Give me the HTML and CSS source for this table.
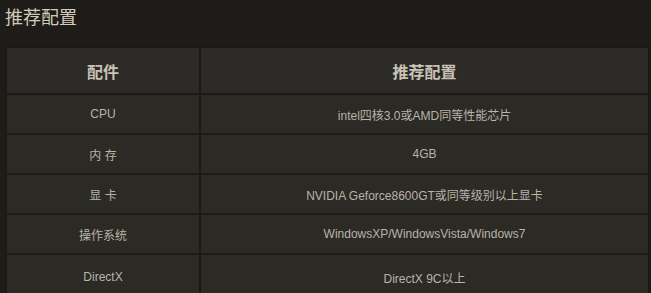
FILE: index.html
```html
<!DOCTYPE html>
<html lang="zh-CN">
<head>
  <meta charset="UTF-8" />
  <title>推荐配置</title>
  <link rel="stylesheet" href="styles.css">
</head>
<body>
  <div class="section">
    <h2 class="section-title">推荐配置</h2>
    <table class="spec-table">
      <thead>
        <tr>
          <th class="col-part">配件</th>
          <th>推荐配置</th>
        </tr>
      </thead>
      <tbody>
        <tr>
          <td>CPU</td>
          <td>intel四核3.0或AMD同等性能芯片</td>
        </tr>
        <tr>
          <td>内 存</td>
          <td>4GB</td>
        </tr>
        <tr>
          <td>显 卡</td>
          <td>NVIDIA Geforce8600GT或同等级别以上显卡</td>
        </tr>
        <tr>
          <td>操作系统</td>
          <td>WindowsXP/WindowsVista/Windows7</td>
        </tr>
        <tr class="last-row">
          <td>DirectX</td>
          <td>DirectX 9C以上</td>
        </tr>
      </tbody>
    </table>
  </div>
</body>
</html>
```

FILE: styles.css
```css
body {
  margin: 0;
  padding: 0;
  background-color: #1d1c18;
  font-family: "Liberation Sans", "Noto Sans CJK SC", sans-serif;
  overflow: hidden;
}

.section {
  padding: 6px 0 0 0;
}

.section-title {
  margin: 0 0 16px 5px;
  font-size: 18px;
  font-weight: normal;
  line-height: 24px;
  color: #d2cbbb;
}

.spec-table {
  width: 645px;
  margin-left: 5px;
  border-collapse: separate;
  border-spacing: 2px;
  background-color: #1b1a16;
}

.spec-table th,
.spec-table td {
  background-color: #2b2a25;
  text-align: center;
  padding: 0;
}

.spec-table th {
  height: 45px;
  font-size: 16px;
  font-weight: bold;
  color: #c9c2b5;
  background-color: #2c2b27;
}

.spec-table td {
  height: 38px;
  font-size: 12px;
  color: #b9b3a8;
}

.spec-table .last-row td {
  height: 44px;
}

.col-part {
  width: 192px;
}
```
